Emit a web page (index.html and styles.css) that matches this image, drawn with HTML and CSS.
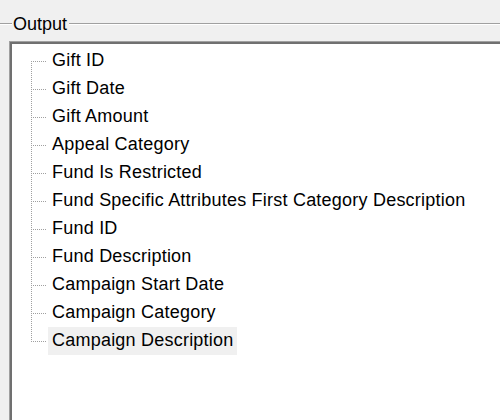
FILE: index.html
```html
<!DOCTYPE html>
<html>
<head>
<meta charset="utf-8">
<link rel="stylesheet" href="styles.css">
</head>
<body>
<div class="group">
  <div class="legend">
    <div class="rule rule-left"></div>
    <span class="legend-text">Output</span>
    <div class="rule rule-right"></div>
  </div>
  <div class="panel">
    <ul class="tree">
      <li class="node"><span class="branch"></span><span class="label">Gift ID</span></li>
      <li class="node"><span class="branch"></span><span class="label">Gift Date</span></li>
      <li class="node"><span class="branch"></span><span class="label">Gift Amount</span></li>
      <li class="node"><span class="branch"></span><span class="label">Appeal Category</span></li>
      <li class="node"><span class="branch"></span><span class="label">Fund Is Restricted</span></li>
      <li class="node"><span class="branch"></span><span class="label">Fund Specific Attributes First Category Description</span></li>
      <li class="node"><span class="branch"></span><span class="label">Fund ID</span></li>
      <li class="node"><span class="branch"></span><span class="label">Fund Description</span></li>
      <li class="node"><span class="branch"></span><span class="label">Campaign Start Date</span></li>
      <li class="node"><span class="branch"></span><span class="label">Campaign Category</span></li>
      <li class="node"><span class="branch"></span><span class="label selected">Campaign Description</span></li>
    </ul>
  </div>
</div>
</body>
</html>
```

FILE: styles.css
```css
html, body {
  margin: 0;
  padding: 0;
  background: #f0f0f0;
  overflow: hidden;
}
body {
  width: 500px;
  height: 420px;
  padding-top: 14px;
  box-sizing: border-box;
  font-family: "Liberation Sans", Arial, sans-serif;
  font-size: 18px;
  letter-spacing: 0.22px;
  color: #000;
}
.group {
  width: 500px;
  overflow: hidden;
}
.legend {
  display: flex;
  align-items: center;
  height: 20px;
}
.rule {
  height: 0;
  border-top: 1px solid #a0a0a0;
  border-bottom: 1px solid #ffffff;
}
.rule-left {
  width: 12px;
  flex: none;
}
.rule-right {
  flex: 1;
  margin-left: 2px;
}
.legend-text {
  margin-left: 1px;
  line-height: 20px;
  white-space: nowrap;
  letter-spacing: 0;
}
.panel {
  margin-top: 7px;
  margin-left: 9px;
  width: 491px;
  height: 379px;
  background: #ffffff;
  border-top: 1px solid #a0a0a0;
  border-left: 1px solid #a0a0a0;
  box-shadow: inset 2px 2px 0 #707070;
  box-sizing: border-box;
  padding: 2px 0 0 2px;
  overflow: hidden;
}
.tree {
  list-style: none;
  margin: 0;
  padding: 3px 0 0 0;
  background-image: repeating-linear-gradient(to bottom, #a0a0a0 0 1px, transparent 1px 2px);
  background-repeat: no-repeat;
  background-position: 19px 17px;
  background-size: 1px 281px;
}
.node {
  display: flex;
  align-items: stretch;
  height: 28px;
}
.branch {
  flex: none;
  width: 17px;
  margin-left: 19px;
  background-image: repeating-linear-gradient(to right, #a0a0a0 0 1px, transparent 1px 2px);
  background-repeat: no-repeat;
  background-position: 0 14px;
  background-size: 15px 1px;
}
.label {
  padding: 0 4px;
  height: 28px;
  line-height: 26px;
  white-space: nowrap;
}
.selected {
  background: #f0f0f0;
}
```
